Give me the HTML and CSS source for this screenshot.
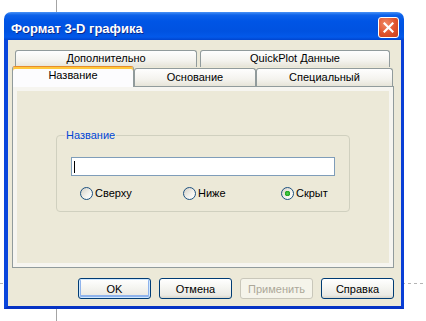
FILE: index.html
```html
<!DOCTYPE html>
<html lang="ru">
<head>
  <meta charset="UTF-8" />
  <meta name="viewport" content="width=device-width, initial-scale=1.0" />
  <title>Формат 3-D графика</title>
  <link rel="stylesheet" href="styles.css">
</head>
<body>
  <div class="window">
    <!-- Title bar -->
    <div class="titlebar">
      <span class="title">Формат 3-D графика</span>
      <button class="close" type="button" aria-label="Закрыть">
        <svg width="11" height="11" viewBox="0 0 11 11">
          <path d="M1.5 1.5 L9.5 9.5 M9.5 1.5 L1.5 9.5" stroke="#fff" stroke-width="2.2" stroke-linecap="square" fill="none" />
        </svg>
      </button>
    </div>

    <div class="client">
      <!-- Tabs -->
      <div class="tab-row back">
        <div class="tab tab-extra">Дополнительно</div>
        <div class="tab tab-quick">QuickPlot Данные</div>
      </div>
      <div class="tab-row front">
        <div class="tab tab-name selected">Название</div>
        <div class="tab tab-base">Основание</div>
        <div class="tab tab-special">Специальный</div>
      </div>

      <!-- Tab page -->
      <div class="panel">
        <fieldset class="group">
          <legend>Название</legend>
          <div class="textbox"><span class="caret"></span></div>
          <div class="radios">
            <label class="radio"><span class="dot"></span>Сверху</label>
            <label class="radio"><span class="dot"></span>Ниже</label>
            <label class="radio"><span class="dot checked"></span>Скрыт</label>
          </div>
        </fieldset>
      </div>

      <!-- Dialog buttons -->
      <div class="buttons">
        <button class="btn default" type="button">OK</button>
        <button class="btn" type="button">Отмена</button>
        <button class="btn" type="button" disabled>Применить</button>
        <button class="btn" type="button">Справка</button>
      </div>
    </div>
  </div>
</body>
</html>
```

FILE: styles.css
```css
html, body {
  height: 100%;
}
html {
  background:
    linear-gradient(#a4a4a4, #a4a4a4) 56px 0 / 1px 100% no-repeat,
    repeating-linear-gradient(90deg, #b4b4b4 0 3px, transparent 3px 6px) 0 283px / 100% 1px no-repeat,
    #fff;
}
body {
  margin: 0;
  font-family: "Liberation Sans", Arial, sans-serif;
  font-size: 11px;
  color: #000;
}
.window {
  width: 400px;
  margin: 12px 0 0 4px;
}

/* title bar */
.titlebar {
  height: 28px;
  box-sizing: border-box;
  padding: 0 5px 0 7px;
  display: flex;
  justify-content: space-between;
  align-items: flex-start;
  border-radius: 7px 7px 0 0;
  background: linear-gradient(#4a93f6 0, #0d62ea 3px, #0055e5 9px, #0052e0 19px, #0359ea 25px, #0045cf 28px);
}
.title {
  margin-top: 9px;
  line-height: 15px;
  font-size: 13px;
  font-weight: bold;
  color: #fff;
  text-shadow: 1px 1px 0 #0b2a8c;
}
.close {
  margin-top: 5px;
  width: 21px;
  height: 21px;
  padding: 0;
  display: flex;
  align-items: center;
  justify-content: center;
  border: 1px solid #fff;
  border-radius: 3px;
  background: radial-gradient(circle at 35% 30%, #f08a66, #e0532c 55%, #c8401d);
}

/* client area */
.client {
  background: #ece9d8;
  border-style: solid;
  border-width: 0 3px 3px 4px;
  border-color: #0a46dc #0a3fd6 #0633c4 #0a46dc;
  padding: 10px 7px 7px 4px;
}

/* tabs */
.tab-row {
  display: flex;
}
.tab-row.back {
  height: 16px;
  padding-left: 3px;
  gap: 3px;
}
.tab-row.front {
  height: 20px;
  align-items: flex-end;
}
.tab {
  box-sizing: border-box;
  border: 1px solid #919b9c;
  border-bottom: none;
  border-radius: 3px 3px 0 0;
  background: linear-gradient(#fefefe, #f4f3ee 60%, #e6e4d8);
  text-align: center;
  line-height: 16px;
}
.back .tab {
  height: 17px;
  line-height: 15px;
}
.front .tab {
  height: 18px;
}
.tab-extra { width: 182px; }
.tab-quick { width: 190px; }
.tab-name { width: 122px; }
.tab-base { width: 122px; }
.tab-special { width: 137px; }
.tab.selected {
  position: relative;
  z-index: 1;
  height: 21px;
  margin-bottom: -1px;
  line-height: 17px;
  border-top: 1px solid #e68b2c;
  box-shadow: inset 0 2px 0 #ffc83c;
  background: #fcfcfe;
}

/* tab page */
.panel {
  height: 182px;
  box-sizing: border-box;
  border: 1px solid #919b9c;
  background: #ece9d8;
  box-shadow: inset 0 0 0 4px #f6f5f0;
  padding-top: 42px;
}
.group {
  width: 294px;
  box-sizing: border-box;
  margin: 0 auto;
  padding: 0 14px 11px 14px;
  border: 1px solid #d0d0bf;
  border-radius: 4px;
}
.group legend {
  margin-left: -6px;
  padding: 0 1px;
  line-height: 13px;
  color: #0046d5;
}
.textbox {
  margin-top: 15px;
  height: 19px;
  box-sizing: border-box;
  border: 1px solid #7f9db9;
  background: #fff;
  padding: 3px 0 0 2px;
}
.caret {
  display: block;
  width: 1px;
  height: 12px;
  background: #000;
}
.radios {
  margin-top: 11px;
  padding-left: 9px;
  display: grid;
  grid-template-columns: 103px 98px auto;
}
.radio {
  display: flex;
  align-items: center;
  gap: 2px;
  line-height: 13px;
}
.dot {
  width: 13px;
  height: 13px;
  box-sizing: border-box;
  border: 1px solid #1c5180;
  border-radius: 50%;
  background: linear-gradient(135deg, #d4d0c6, #f4f3ee 60%, #fff);
}
.dot.checked {
  background:
    radial-gradient(circle, #4fd44f 0, #21a121 2.5px, transparent 3px),
    linear-gradient(135deg, #d4d0c6, #f4f3ee 60%, #fff);
}

/* buttons */
.buttons {
  margin-top: 10px;
  display: flex;
  justify-content: flex-end;
  gap: 8px;
}
.btn {
  width: 73px;
  height: 21px;
  padding: 0;
  font-family: "Liberation Sans", Arial, sans-serif;
  font-size: 11px;
  color: #000;
  border: 1px solid #003c74;
  border-radius: 3px;
  background: linear-gradient(#ffffff, #f5f5f1 45%, #ebeae4 85%, #d9d5ca);
}
.btn.default {
  box-shadow: inset 0 0 0 1px #cee7ff, inset 0 -1px 0 2px #8fb3ec;
}
.btn:disabled {
  color: #aca899;
  border-color: #c9c7ba;
  background: #f5f4ea;
}
```
